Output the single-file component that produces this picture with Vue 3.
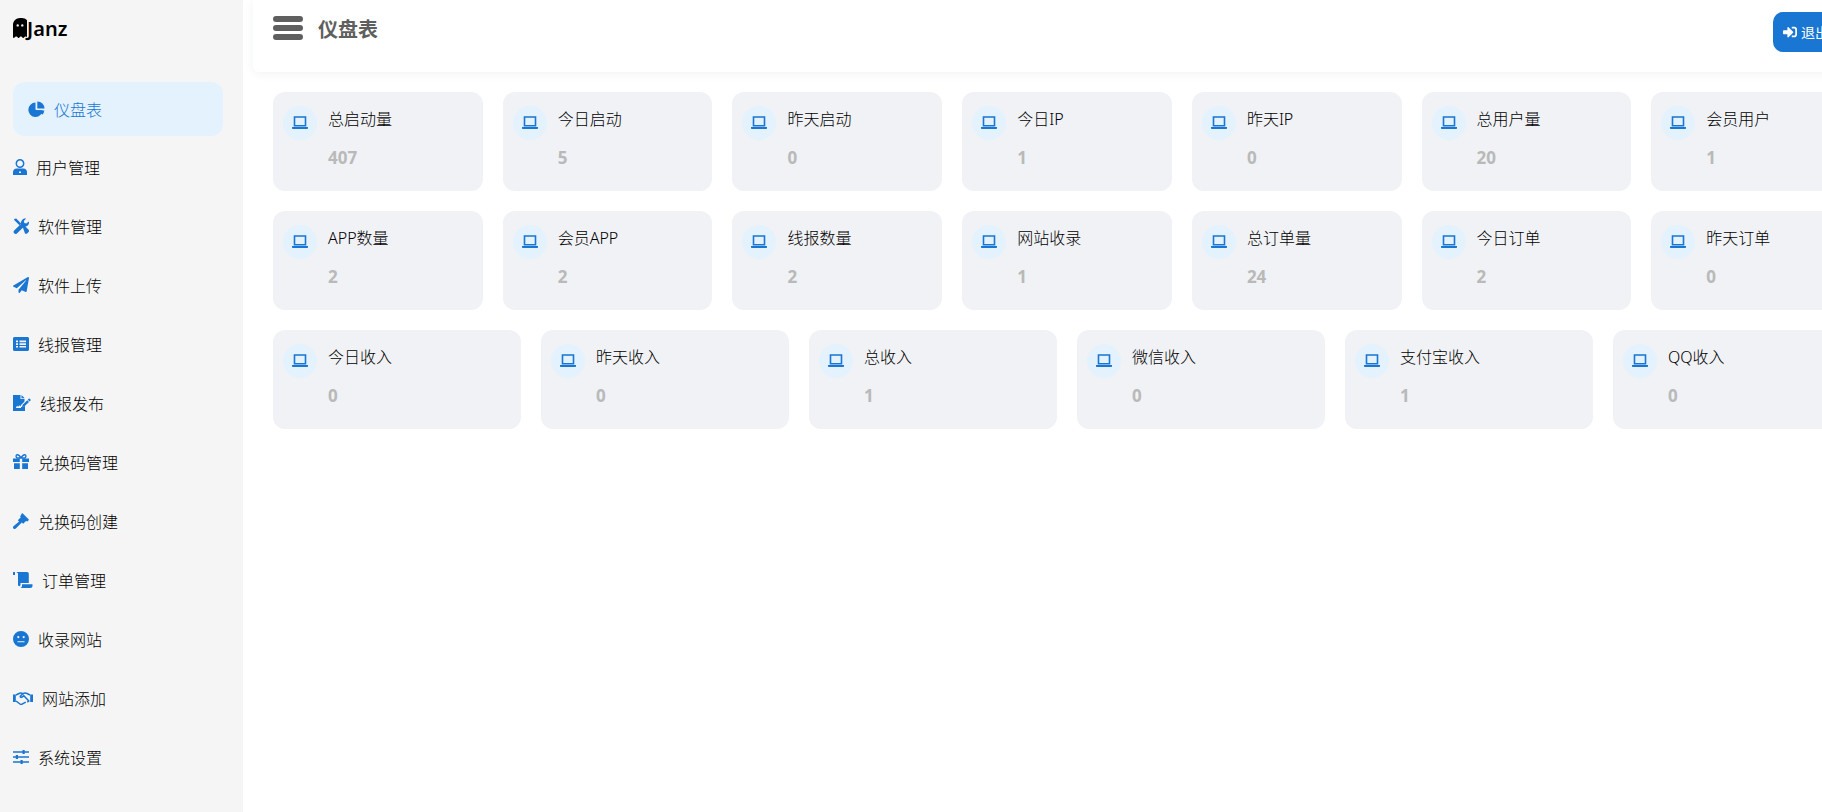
<template>
  <div class="admin-page">
    <aside class="sidebar">
      <div class="logo">
        <svg class="ghost" viewBox="0 0 14 20" aria-hidden="true">
          <path
            fill-rule="evenodd"
            d="M7 0C3 0 0 3 0 7v12c0 .8.9 1.200 1.500.6l1.200-1c.3-.3.7-.3 1 0l1.400 1.200c.3.3.7.3 1 0l1.300-1.200c.3-.3.7-.3 1 0l1.300 1.200c.3.3.7.3 1 0l1.400-1.200c.3-.3.7-.3 1 0l1.200 1c.6.6 1.500.2 1.500-.6V7c0-4-3-7-7-7zM4.700 6.200a1.200 1.200 0 1 1 0 2.400 1.200 1.200 0 0 1 0-2.400zm4.600 0a1.200 1.200 0 1 1 0 2.400 1.200 1.200 0 0 1 0-2.400z"
          />
        </svg>
        <span>Janz</span>
      </div>

      <nav class="menu">
        <a
          v-for="item in menu"
          :key="item.label"
          class="menu-item"
          :class="{ active: item.active }"
          href="#"
        >
          <svg
            class="icon"
            :width="icons[item.icon].w"
            :height="icons[item.icon].h"
            :viewBox="`0 0 ${icons[item.icon].w} ${icons[item.icon].h}`"
            aria-hidden="true"
          >
            <path
              v-for="(p, i) in icons[item.icon].paths"
              :key="i"
              :d="p.d"
              :fill="p.s ? 'none' : 'currentColor'"
              :stroke="p.s ? 'currentColor' : 'none'"
              :stroke-width="p.s || 0"
              fill-rule="evenodd"
            />
          </svg>
          <span>{{ item.label }}</span>
        </a>
      </nav>
    </aside>

    <main class="main">
      <header class="topbar">
        <div class="topbar-left">
          <svg class="bars" viewBox="0 0 30 24" aria-hidden="true">
            <rect width="30" height="6" rx="3" />
            <rect y="9" width="30" height="6" rx="3" />
            <rect y="18" width="30" height="6" rx="3" />
          </svg>
          <h1>仪盘表</h1>
        </div>
        <button class="logout" type="button">
          <svg viewBox="0 0 512 512" aria-hidden="true">
            <path
              d="M416 448h-84c-6.6 0-12-5.4-12-12v-40c0-6.6 5.4-12 12-12h84c17.7 0 32-14.3 32-32V160c0-17.7-14.3-32-32-32h-84c-6.6 0-12-5.4-12-12V76c0-6.6 5.4-12 12-12h84c53 0 96 43 96 96v192c0 53-43 96-96 96zm-47-201L201 79c-15-15-41-4.5-41 17v96H24c-13.3 0-24 10.7-24 24v96c0 13.3 10.7 24 24 24h136v96c0 21.5 26 32 41 17l168-168c9.3-9.4 9.3-24.6 0-34z"
              fill="currentColor"
            />
          </svg>
          退出
        </button>
      </header>

      <section class="stats">
        <div v-for="(row, r) in rows" :key="r" class="stat-row">
          <div v-for="card in row" :key="card.label" class="stat-card">
            <span class="stat-icon">
              <svg viewBox="0 0 16 14" aria-hidden="true">
                <path d="M2.500 1h11v8.700h-11z" fill="none" stroke="currentColor" stroke-width="1.600" />
                <path d="M0 11h16v1c0 .6-.5 1-1 1H1c-.5 0-1-.4-1-1z" fill="currentColor" />
              </svg>
            </span>
            <div class="stat-text">
              <div class="stat-label">{{ card.label }}</div>
              <div class="stat-value">{{ card.value }}</div>
            </div>
          </div>
        </div>
      </section>
    </main>
  </div>
</template>

<script setup>
const icons = {
  pie: {
    w: 17,
    h: 16,
    paths: [
      { d: 'M7.500 1.600A7.200 7.200 0 1 0 14.700 9.200L8.100 9 7.500 8.600z' },
      { d: 'M9.300.6A7 7 0 0 1 16.500 7.600H9.300z' },
      { d: 'M10.100 9.400h6.200a7 7 0 0 1-1.900 4.300z' }
    ]
  },
  user: {
    w: 14,
    h: 16,
    paths: [
      { d: 'M7 .8a3.700 3.700 0 1 1 0 7.400 3.700 3.700 0 0 1 0-7.400z', s: 1.5 },
      { d: 'M0 16v-3c0-2 1.600-3.600 3.600-3.600h6.800c2 0 3.600 1.600 3.600 3.600v3zM6 12.500v1.500h2v-1.500z' }
    ]
  },
  tools: {
    w: 16,
    h: 16,
    paths: [
      { d: 'M1 1l2.200-.6 5 5-1.800 1.800-5-5zM9.800 9.200l1.600-1.600 4.200 4.200c.6.6.6 1.500 0 2.100l-1.500 1.500c-.6.6-1.500.6-2.100 0z' },
      { d: 'M15.800 3.400c.5 1.600.1 3.100-1 4.200-1 1-2.400 1.300-3.700 1L3.900 15.400c-.7.7-1.900.7-2.700-.1-.8-.8-.8-2 0-2.700l6.900-6.900c-.3-1.400 0-2.800 1-3.800C10.300.6 11.800.2 13.200.6L10.800 3l.5 2 2 .5z' }
    ]
  },
  plane: {
    w: 16,
    h: 16,
    paths: [
      { d: 'M14.900.1L.4 8.500c-.6.300-.5 1.100.1 1.300l3.300 1.400 9-7.900c.2-.2.4.100.3.300L5.500 12.700v2.500c0 .7.9 1 1.300.5l2-2.400 3.900 1.600c.4.200.9-.1 1-.6L16 .9c.1-.6-.6-1.100-1.100-.8z' }
    ]
  },
  table: {
    w: 16,
    h: 14,
    paths: [
      { d: 'M1.500 0h13c.8 0 1.500.7 1.500 1.500v11c0 .8-.7 1.500-1.500 1.500h-13C.7 14 0 13.300 0 12.500v-11C0 .7.7 0 1.500 0zM3 3.500v1.700h2V3.500zM6.500 3.500v1.700H13V3.500zM3 6.200v1.700h2V6.200zM6.500 6.200v1.700H13V6.200zM3 8.900v1.700h2V8.900zM6.500 8.900v1.700H13V8.900z' }
    ]
  },
  sign: {
    w: 18,
    h: 16,
    paths: [
      { d: 'M0 0h7.500v4h4v2.400L8 10v1.500c-.6-.8-1.200-1.300-1.700-.9-.5.300-.8 1.200-1.300 1.100-.4-.1-.3-1-.8-1-.6 0-.9 1.600-1.400 2.300h5.200v-1h.5l2 .1 1.500-1.500V16H0zM8.500 0l3 3v.3h-3z' },
      { d: 'M17.500 4.600l-.8-.8c-.3-.3-.7-.3-1 0l-.9.900 1.800 1.800.9-.9c.3-.3.3-.7 0-1zM14.300 5.200l-4.800 4.900-.5 2 2-.4 5-4.800z' }
    ]
  },
  gift: {
    w: 16,
    h: 15,
    paths: [
      { d: 'M0 4.500h6.800V8H0zM9.200 4.500H16V8H9.200zM1 9.200h5.800V15H1zM9.200 9.200H15V15H9.200z' },
      { d: 'M8 4C6.500 1.200 5.200.6 4 .8 2.800 1 2.700 3.500 4.200 4zM8 4c1.500-2.800 2.800-3.400 4-3.200 1.200.2 1.300 2.700-.2 3.200z', s: 1.4 }
    ]
  },
  gavel: {
    w: 16,
    h: 16,
    paths: [
      { d: 'M9.800.4l5.800 5.800c.3.300.3.700 0 1l-1 1c-.3.300-.7.300-1 0l-.4-.4-3 3-1.400-1.400L2.800 15.500c-.8.700-1.800.7-2.400 0-.6-.6-.6-1.600.1-2.300L6.100 8.600 4.800 7.300l3-3-.4-.4c-.3-.3-.3-.7 0-1L8.800.4c.3-.3.700-.3 1 0z' }
    ]
  },
  scroll: {
    w: 20,
    h: 16,
    paths: [
      { d: 'M0 .5c0-.3.300-.5.500-.5H2v3H0zM3 0h11c1 0 1.800.8 1.800 1.800V11H7.500v2c0 .7-.6 1.200-1.200 1.200S5 13.700 5 13V2.200C5 1 4.200 0 3 0zM9 12.200h10.500v1.500c0 1.300-1 2.300-2.300 2.300H7.600c1-.5 1.400-1.500 1.400-2.500z' }
    ]
  },
  meh: {
    w: 16,
    h: 16,
    paths: [
      { d: 'M8 0a8 8 0 1 1 0 16A8 8 0 0 1 8 0zM5.300 5a1.100 1.100 0 1 0 0 2.200 1.100 1.100 0 0 0 0-2.200zM10.700 5a1.100 1.100 0 1 0 0 2.200 1.100 1.100 0 0 0 0-2.200zM4.500 10.300v1h7v-1z' }
    ]
  },
  hands: {
    w: 20,
    h: 14,
    paths: [
      { d: 'M0 3.500h2.800v7.500H0zM17.200 3.500H20v7.500h-2.800z' },
      { d: 'M3 4l3-1.500c1.500-.7 2.600-.5 4 .2l1 .5M17 4l-3-1.500c-1.500-.7-2.800-.7-4.200.3L7.500 5c-.8.8.4 1.800 1.400 1.100l1.900-1.300 5 5.200-1.500 1.200M3 10l4 3c.7.5 1.500.5 2 .1l3.800-2', s: 1.5 }
    ]
  },
  sliders: {
    w: 16,
    h: 14,
    paths: [
      { d: 'M0 1.200h9.500V0h2.200v1.200H16v1.600h-4.300V4H9.500V2.800H0zM0 6.200h2.800V5H5v1.200h11v1.600H5V9H2.800V7.800H0zM0 11.200h7.500V10h2.200v1.200H16v1.600H9.700V14H7.500v-1.200H0z' }
    ]
  }
}

const menu = [
  { label: '仪盘表', icon: 'pie', active: true },
  { label: '用户管理', icon: 'user' },
  { label: '软件管理', icon: 'tools' },
  { label: '软件上传', icon: 'plane' },
  { label: '线报管理', icon: 'table' },
  { label: '线报发布', icon: 'sign' },
  { label: '兑换码管理', icon: 'gift' },
  { label: '兑换码创建', icon: 'gavel' },
  { label: '订单管理', icon: 'scroll' },
  { label: '收录网站', icon: 'meh' },
  { label: '网站添加', icon: 'hands' },
  { label: '系统设置', icon: 'sliders' }
]

const rows = [
  [
    { label: '总启动量', value: 407 },
    { label: '今日启动', value: 5 },
    { label: '昨天启动', value: 0 },
    { label: '今日IP', value: 1 },
    { label: '昨天IP', value: 0 },
    { label: '总用户量', value: 20 },
    { label: '会员用户', value: 1 }
  ],
  [
    { label: 'APP数量', value: 2 },
    { label: '会员APP', value: 2 },
    { label: '线报数量', value: 2 },
    { label: '网站收录', value: 1 },
    { label: '总订单量', value: 24 },
    { label: '今日订单', value: 2 },
    { label: '昨天订单', value: 0 }
  ],
  [
    { label: '今日收入', value: 0 },
    { label: '昨天收入', value: 0 },
    { label: '总收入', value: 1 },
    { label: '微信收入', value: 0 },
    { label: '支付宝收入', value: 1 },
    { label: 'QQ收入', value: 0 }
  ]
]
</script>

<style>
html,
body {
  margin: 0;
  background: #ffffff;
  overflow: hidden;
}
</style>

<style scoped>
.admin-page {
  display: flex;
  width: 1822px;
  height: 812px;
  overflow: hidden;
  background: #ffffff;
  font-family: 'Noto Sans', 'Noto Sans CJK SC', sans-serif;
  color: #000000;
}

.sidebar {
  flex: none;
  width: 243px;
  box-sizing: border-box;
  padding: 0 13px;
  background: #f5f5f5;
}

.logo {
  display: flex;
  align-items: center;
  height: 56px;
  font-size: 20px;
  font-weight: 600;
  color: #000000;
}

.ghost {
  width: 14px;
  height: 20px;
  fill: #000000;
}

.menu {
  display: flex;
  flex-direction: column;
  margin-top: 26px;
  width: 210px;
}

.menu-item {
  display: flex;
  align-items: center;
  gap: 9px;
  height: 59px;
  font-size: 16px;
  font-weight: 300;
  color: #000000;
  text-decoration: none;
}

.menu-item .icon {
  flex: none;
  color: #1976d2;
}

.menu-item.active {
  height: 54px;
  margin-bottom: 1px;
  padding-left: 15px;
  gap: 9px;
  border-radius: 12px;
  background: #e3f2fd;
  color: #1976d2;
}

.main {
  flex: none;
  width: 1628px;
  margin-left: 10px;
}

.topbar {
  display: flex;
  justify-content: space-between;
  align-items: center;
  height: 72px;
  box-sizing: border-box;
  padding: 0 40px 0 20px;
  border-radius: 0 0 0 6px;
  background: #ffffff;
  box-shadow: 0 2px 10px rgba(30, 50, 90, 0.06);
}

.topbar-left {
  display: flex;
  align-items: center;
  gap: 15px;
}

.bars {
  width: 30px;
  height: 24px;
  margin-top: -16px;
  fill: #5f5f5f;
}

.topbar h1 {
  margin: -16px 0 0;
  font-size: 20px;
  font-weight: 700;
  color: #5f5f5f;
}

.logout {
  display: inline-flex;
  align-items: center;
  gap: 4px;
  height: 40px;
  margin-top: -8px;
  padding: 0 10px;
  width: 68px;
  border: 0;
  border-radius: 10px;
  background: #1976d2;
  color: #ffffff;
  font-family: inherit;
  font-size: 14px;
  white-space: nowrap;
}

.logout svg {
  width: 14px;
  height: 14px;
}

.stats {
  display: flex;
  flex-direction: column;
  gap: 20px;
  padding: 20px;
}

.stat-row {
  display: flex;
  gap: 20px;
}

.stat-card {
  flex: 1;
  display: flex;
  gap: 11px;
  height: 99px;
  box-sizing: border-box;
  padding: 14px 10px;
  border-radius: 12px;
  background: #f0f2f5;
}

.stat-icon {
  flex: none;
  display: grid;
  place-items: center;
  width: 34px;
  height: 34px;
  border-radius: 50%;
  background: #e3f2fd;
  color: #1976d2;
}

.stat-icon svg {
  width: 16px;
  height: 14px;
}

.stat-label {
  height: 26px;
  font-size: 16px;
  line-height: 26px;
  font-weight: 300;
  color: #000000;
}

.stat-value {
  margin-top: 13px;
  font-size: 17px;
  line-height: 26px;
  font-weight: 700;
  color: #b9b9b9;
}
</style>
